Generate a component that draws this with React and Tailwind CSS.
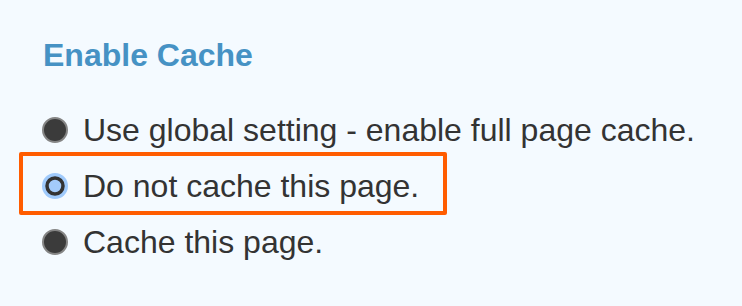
import React from "react";

function RadioDark() {
  return (
    <svg width="26" height="26" viewBox="0 0 26 26" className="shrink-0">
      <circle cx="13" cy="13" r="12" fill="#3b3b3b" stroke="#858585" strokeWidth="2" />
    </svg>
  );
}

function RadioFocus() {
  return (
    <svg width="26" height="26" viewBox="0 0 26 26" className="shrink-0">
      <circle cx="13" cy="13" r="13" fill="#9fcafc" />
      <circle cx="13" cy="13" r="8" fill="#a3cbfa" stroke="#333333" strokeWidth="3.5" />
    </svg>
  );
}

export default function App() {
  const font = { fontFamily: '"Liberation Sans", Arial, sans-serif' };
  return (
    <div
      className="w-[742px] h-[306px] bg-[#f4faff] pl-[42px] pt-[35px] overflow-hidden"
      style={font}
    >
      <h2 className="text-[32px] leading-[40px] font-bold text-[#4692c4] pl-[1px]">
        Enable Cache
      </h2>
      <div className="mt-[27px] flex flex-col text-[32px] leading-[56px] text-[#333333]">
        <label className="flex items-center h-[56px]">
          <RadioDark />
          <span className="ml-[15px]">Use global setting - enable full page cache.</span>
        </label>
        <label className="relative flex items-center h-[56px]">
          <span className="absolute left-[-23px] top-[-6px] w-[428px] h-[63px] border-4 border-[#ff5c00] rounded-[2px]" />
          <RadioFocus />
          <span className="ml-[15px]">Do not cache this page.</span>
        </label>
        <label className="flex items-center h-[56px]">
          <RadioDark />
          <span className="ml-[15px]">Cache this page.</span>
        </label>
      </div>
    </div>
  );
}
